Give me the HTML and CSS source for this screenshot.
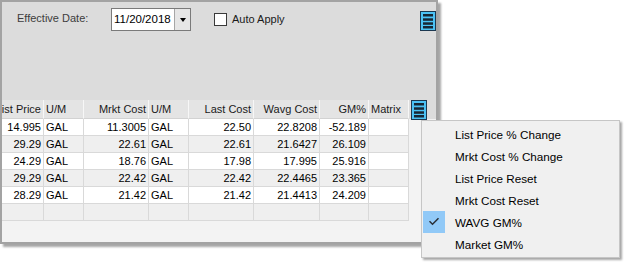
FILE: index.html
```html
<!DOCTYPE html>
<html lang="en">
<head>
    <meta charset="UTF-8">
    <meta name="viewport" content="width=device-width, initial-scale=1.0">
    <title>Price Grid</title>
    <link rel="stylesheet" href="styles.css">
</head>
<body>
    <div class="screen">
        <div class="panel">
            <!-- Toolbar -->
            <div class="toolbar">
                <span class="date-label">Effective Date:</span>
                <div class="date-box">
                    <span class="date-value">11/20/2018</span>
                    <span class="date-drop"><span class="arrow"></span></span>
                </div>
                <label class="auto-apply"><span class="check-box"></span>Auto Apply</label>
                <span class="menu-btn toolbar-btn">
                    <svg width="16" height="20" viewBox="0 0 16 20">
                        <rect x="0.5" y="0.5" width="15" height="19" fill="#4cc2f4" stroke="#1c3850"/>
                        <rect x="3" y="3" width="10" height="2.5" fill="#172634"/>
                        <rect x="3" y="7.3" width="10" height="2.5" fill="#172634"/>
                        <rect x="3" y="11.3" width="10" height="2.5" fill="#172634"/>
                        <rect x="3" y="15" width="10" height="2.5" fill="#172634"/>
                    </svg>
                </span>
            </div>

            <!-- Grid -->
            <div class="grid-area">
                <div class="grid-clip">
                    <div class="grid">
                        <div class="row head">
                            <span class="num">List Price</span>
                            <span>U/M</span>
                            <span class="num">Mrkt Cost</span>
                            <span>U/M</span>
                            <span class="num">Last Cost</span>
                            <span class="num">Wavg Cost</span>
                            <span class="num">GM%</span>
                            <span>Matrix</span>
                        </div>
                        <div class="row">
                            <span class="num">14.995</span><span>GAL</span><span class="num">11.3005</span><span>GAL</span>
                            <span class="num">22.50</span><span class="num">22.8208</span><span class="num">-52.189</span><span></span>
                        </div>
                        <div class="row">
                            <span class="num">29.29</span><span>GAL</span><span class="num">22.61</span><span>GAL</span>
                            <span class="num">22.61</span><span class="num">21.6427</span><span class="num">26.109</span><span></span>
                        </div>
                        <div class="row">
                            <span class="num">24.29</span><span>GAL</span><span class="num">18.76</span><span>GAL</span>
                            <span class="num">17.98</span><span class="num">17.995</span><span class="num">25.916</span><span></span>
                        </div>
                        <div class="row">
                            <span class="num">29.29</span><span>GAL</span><span class="num">22.42</span><span>GAL</span>
                            <span class="num">22.42</span><span class="num">22.4465</span><span class="num">23.365</span><span></span>
                        </div>
                        <div class="row">
                            <span class="num">28.29</span><span>GAL</span><span class="num">21.42</span><span>GAL</span>
                            <span class="num">21.42</span><span class="num">21.4413</span><span class="num">24.209</span><span></span>
                        </div>
                        <div class="row">
                            <span></span><span></span><span></span><span></span>
                            <span></span><span></span><span></span><span></span>
                        </div>
                    </div>
                </div>
                <div class="grid-side">
                    <div class="side-head">
                        <span class="menu-btn">
                            <svg width="16" height="20" viewBox="0 0 16 20">
                                <rect x="0.5" y="0.5" width="15" height="19" fill="#4cc2f4" stroke="#1c3850"/>
                                <rect x="3" y="3" width="10" height="2.5" fill="#172634"/>
                                <rect x="3" y="7.3" width="10" height="2.5" fill="#172634"/>
                                <rect x="3" y="11.3" width="10" height="2.5" fill="#172634"/>
                                <rect x="3" y="15" width="10" height="2.5" fill="#172634"/>
                            </svg>
                        </span>
                    </div>
                </div>
            </div>
        </div>

        <!-- Column chooser menu -->
        <ul class="popup-menu">
            <li><span class="mark"></span>List Price % Change</li>
            <li><span class="mark"></span>Mrkt Cost % Change</li>
            <li><span class="mark"></span>List Price Reset</li>
            <li><span class="mark"></span>Mrkt Cost Reset</li>
            <li class="checked">
                <span class="mark">
                    <svg width="22" height="22" viewBox="0 0 22 22">
                        <path d="M6.5 10.2 L9.5 13.2 L15.5 7.2" fill="none" stroke="#2a2f36" stroke-width="1.5"/>
                    </svg>
                </span>WAVG GM%
            </li>
            <li><span class="mark"></span>Market GM%</li>
        </ul>
    </div>
</body>
</html>
```

FILE: styles.css
```css
body {
    margin: 0;
    background-color: #fff;
    font-family: "Liberation Sans", Arial, sans-serif;
    color: #000;
}
.screen {
    position: relative;
    width: 626px;
    height: 265px;
    overflow: hidden;
}
.panel {
    width: 438px;
    height: 244px;
    box-sizing: border-box;
    border: 2px solid #a3a3a3;
    background-color: #f3f3f3;
    box-shadow: 3px 3px 2px rgba(0, 0, 0, 0.35);
    display: flex;
    flex-direction: column;
}
.toolbar {
    height: 98px;
    flex-shrink: 0;
    background-color: #dcdcdc;
    display: flex;
    align-items: flex-start;
}
.date-label {
    margin: 10px 0 0 15px;
    width: 94px;
    font-size: 11px;
    line-height: 13px;
    color: #3c3c3c;
}
.date-box {
    margin-top: 6px;
    width: 80px;
    height: 23px;
    box-sizing: border-box;
    border: 1px solid #7a7a7a;
    background-color: #fff;
    display: flex;
}
.date-value {
    flex: 1;
    padding-left: 2px;
    font-size: 11.5px;
    line-height: 21px;
}
.date-drop {
    width: 16px;
    box-sizing: border-box;
    border-left: 1px solid #a6a6a6;
    background-color: #e6e6e6;
    display: flex;
    align-items: center;
    justify-content: center;
}
.arrow {
    width: 0;
    height: 0;
    border-left: 3.5px solid transparent;
    border-right: 3.5px solid transparent;
    border-top: 4px solid #000;
}
.auto-apply {
    margin: 11px 0 0 23px;
    display: flex;
    align-items: center;
    font-size: 11px;
    line-height: 13px;
    color: #1a1a1a;
}
.check-box {
    width: 13px;
    height: 13px;
    box-sizing: border-box;
    border: 1px solid #3a3a3a;
    background-color: #fff;
    margin-right: 5px;
}
.menu-btn {
    display: block;
    width: 16px;
    height: 20px;
}
.menu-btn svg {
    display: block;
}
.toolbar-btn {
    margin: 9px 0 0 auto;
}
.grid-area {
    flex: 1;
    display: flex;
}
.grid-clip {
    width: 407px;
    overflow: hidden;
}
.grid {
    margin-left: -14px;
    width: 421px;
}
.row {
    display: grid;
    grid-template-columns: 56px 40px 65px 40px 65px 66px 49px 40px;
    height: 17px;
    font-size: 11px;
    line-height: 16px;
}
.row:nth-child(odd) {
    background-color: #efefef;
}
.row:nth-child(even) {
    background-color: #fff;
}
.row span {
    box-sizing: border-box;
    border-right: 1px solid #d9d9d9;
    border-bottom: 1px solid #d9d9d9;
    padding-left: 2px;
    white-space: nowrap;
    overflow: hidden;
}
.row span.num {
    text-align: right;
    padding: 0 2px 0 0;
}
.row.head {
    height: 19px;
    line-height: 18px;
    background-color: #e4e4e4;
    color: #1a1a1a;
}
.row.head span {
    border-right: 1px solid #f7f7f7;
    border-bottom: 1px solid #d2d2d2;
}
.row.head span:first-child {
    border-left: none;
}
.grid-side {
    width: 27px;
}
.side-head {
    height: 19px;
    padding-left: 2px;
    background-color: #dcdcdc;
}
.popup-menu {
    position: absolute;
    left: 421px;
    top: 120px;
    width: 199px;
    height: 138px;
    box-sizing: border-box;
    margin: 0;
    padding: 2px 0;
    list-style: none;
    border: 1px solid #c6c6c6;
    background-color: #f0f0f0;
    box-shadow: 2px 2px 2px rgba(0, 0, 0, 0.35);
    font-size: 11.7px;
    color: #000;
}
.popup-menu li {
    height: 22px;
    display: flex;
    align-items: center;
}
.popup-menu .mark {
    width: 22px;
    height: 22px;
    margin: 0 10px 0 1px;
}
.popup-menu .checked .mark {
    background-color: #91c9f7;
}
.popup-menu .mark svg {
    display: block;
}
```
